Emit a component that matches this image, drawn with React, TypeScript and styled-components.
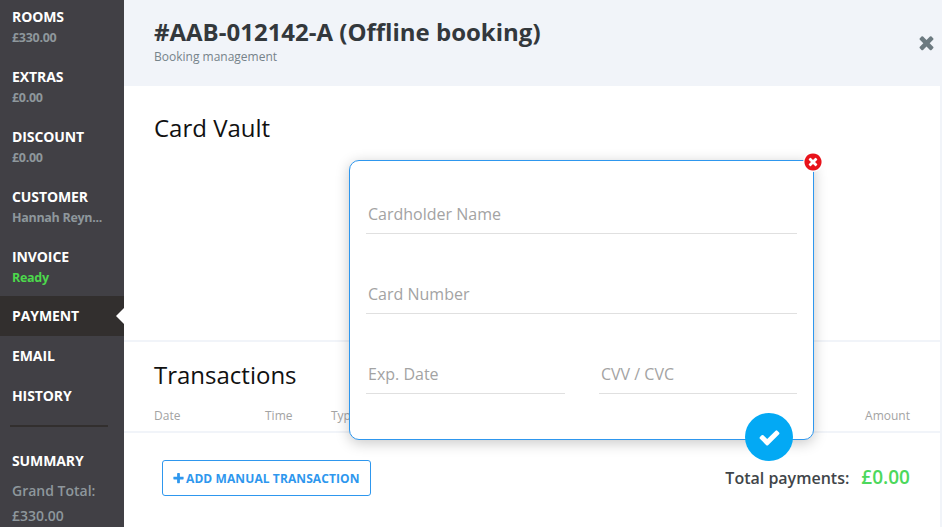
import React from "react";
import styled, { createGlobalStyle } from "styled-components";

const Global = createGlobalStyle`
  html, body { margin: 0; padding: 0; height: 100%; overflow: hidden; background: #fff; }
  body { font-family: "Open Sans", "Liberation Sans", sans-serif; }
  #root { height: 100%; }
`;

const paths = {
  check:
    "M1671 566q0 40-28 68l-724 724-136 136q-28 28-68 28t-68-28l-136-136-362-362q-28-28-28-68t28-68l136-136q28-28 68-28t68 28l294 295 656-657q28-28 68-28t68 28l136 136q28 28 28 68z",
  times:
    "M1490 1322q0 40-28 68l-136 136q-28 28-68 28t-68-28l-294-294-294 294q-28 28-68 28t-68-28l-136-136q-28-28-28-68t28-68l294-294-294-294q-28-28-28-68t28-68l136-136q28-28 68-28t68 28l294 294 294-294q28-28 68-28t68 28l136 136q28 28 28 68t-28 68l-294 294 294 294q28 28 28 68z",
  plus:
    "M1600 736v192q0 40-28 68t-68 28h-416v416q0 40-28 68t-68 28h-192q-40 0-68-28t-28-68v-416h-416q-40 0-68-28t-28-68v-192q0-40 28-68t68-28h416v-416q0-40 28-68t68-28h192q40 0 68 28t28 68v416h416q40 0 68 28t28 68z",
  timesCircle:
    "M1277 1122q0-26-19-45l-181-181 181-181q19-19 19-45 0-27-19-46l-90-90q-19-19-46-19-26 0-45 19l-181 181-181-181q-19-19-45-19-27 0-46 19l-90 90q-19 19-19 46 0 26 19 45l181 181-181 181q-19 19-19 45 0 27 19 46l90 90q19 19 46 19 26 0 45-19l181-181 181 181q19 19 45 19 27 0 46-19l90-90q19-19 19-46zm387-226q0 209-103 385.5t-279.5 279.5-385.5 103-385.5-103-279.5-279.5-103-385.5 103-385.5 279.5-279.5 385.5-103 385.5 103 279.5 279.5 103 385.5z",
};

const Icon = ({ name, size }: { name: keyof typeof paths; size: number }) => (
  <svg width={size} height={size} viewBox="0 0 1792 1792" fill="currentColor" aria-hidden="true">
    <path d={paths[name]} />
  </svg>
);

const Page = styled.div`
  position: relative;
  display: flex;
  width: 942px;
  height: 527px;
  overflow: hidden;
`;

const Sidebar = styled.nav`
  width: 124px;
  flex: none;
  background: #414045;
  display: flex;
  flex-direction: column;
`;

const NavItem = styled.div<{ $active?: boolean; $height?: number }>`
  position: relative;
  flex: none;
  height: ${(p) => p.$height ?? 40}px;
  padding: ${(p) => (p.$height ? 7 : 10)}px 0 0 12px;
  box-sizing: border-box;
  background: ${(p) => (p.$active ? "#322f2e" : "transparent")};
  ${(p) =>
    p.$active &&
    `&::after {
      content: "";
      position: absolute;
      right: 0;
      top: 12px;
      border-style: solid;
      border-width: 8px 8px 8px 0;
      border-color: transparent #fff transparent transparent;
    }`}
`;

const NavLabel = styled.div`
  font-size: 14px;
  line-height: 20px;
  font-weight: 700;
  letter-spacing: -0.1px;
  color: #fff;
`;

const NavSub = styled.div<{ $ok?: boolean }>`
  font-size: 12.5px;
  line-height: 19px;
  font-weight: 700;
  letter-spacing: -0.3px;
  padding-top: 1px;
  color: ${(p) => (p.$ok ? "#4cd84c" : "#8e979c")};
`;

const Divider = styled.div`
  flex: none;
  height: 2px;
  margin: 9px 16px 0 10px;
  background: #322f2e;
`;

const Summary = styled.div`
  padding: 24px 0 0 12px;
`;

const GrandTotal = styled.div<{ $first?: boolean }>`
  font-size: 14px;
  line-height: 25px;
  font-weight: 600;
  color: #8e979c;
  margin-top: ${(p) => (p.$first ? 7 : 0)}px;
`;

const Main = styled.main`
  flex: 1;
  min-width: 0;
  display: flex;
  flex-direction: column;
  border-right: 2px solid #f1f4f9;
`;

const Header = styled.header`
  position: relative;
  height: 86px;
  flex: none;
  box-sizing: border-box;
  margin-right: -2px;
  padding: 15px 30px 0;
  background: #f1f4f9;
`;

const Title = styled.h1`
  margin: 0;
  font-size: 24px;
  line-height: 33px;
  font-weight: 700;
  color: #33383c;
`;

const Subtitle = styled.div`
  font-size: 12px;
  line-height: 16px;
  margin-top: 1px;
  color: #76838a;
`;

const CloseButton = styled.span`
  position: absolute;
  right: 5px;
  top: 32px;
  display: flex;
  color: #6c7a80;
`;

const VaultSection = styled.section`
  height: 256px;
  flex: none;
  box-sizing: border-box;
  padding: 25px 30px 0;
  border-bottom: 2px solid #f1f4f9;
`;

const SectionTitle = styled.h2`
  margin: 0;
  font-size: 24px;
  line-height: 33px;
  font-weight: 400;
  color: #111;
`;

const TransSection = styled.section`
  height: 91px;
  flex: none;
  box-sizing: border-box;
  padding: 16px 30px 0;
  border-bottom: 2px solid #f1f4f9;
`;

const Columns = styled.div`
  display: grid;
  grid-template-columns: 111px 66px 1fr auto;
  margin-top: 16px;
`;

const Column = styled.span`
  font-size: 12px;
  line-height: 17px;
  color: #a3a3a3;
`;

const Footer = styled.div`
  display: flex;
  align-items: flex-start;
  justify-content: space-between;
  padding: 27px 30px 0 38px;
`;

const AddButton = styled.button`
  display: flex;
  align-items: center;
  gap: 1px;
  width: 209px;
  height: 36px;
  box-sizing: border-box;
  padding: 0 0 0 9px;
  background: #fff;
  border: 1px solid #2e97ee;
  border-radius: 3px;
  font-family: inherit;
  font-size: 12px;
  font-weight: 700;
  letter-spacing: 0.1px;
  color: #2e97ee;
`;

const Total = styled.div`
  display: flex;
  align-items: baseline;
  gap: 12px;
  margin-top: 1px;
  font-size: 16px;
  line-height: 32px;
  font-weight: 600;
  color: #3f4549;
`;

const TotalAmount = styled.span`
  font-size: 19px;
  font-weight: 600;
  color: #4cd85c;
`;

const Modal = styled.div`
  position: absolute;
  left: 349px;
  top: 160px;
  width: 465px;
  height: 280px;
  box-sizing: border-box;
  background: #fff;
  border: 1px solid #2e97ee;
  border-radius: 10px;
  box-shadow: 0 3px 14px rgba(0, 0, 0, 0.22);
  padding: 33px 16px 0;
`;

const Field = styled.div`
  height: 40px;
  box-sizing: border-box;
  padding: 9px 2px 0;
  border-bottom: 1px solid #e0e0e0;
  font-size: 16px;
  line-height: 22px;
  color: #a3a3a3;
  margin-bottom: 40px;
`;

const FieldRow = styled.div`
  display: grid;
  grid-template-columns: 199px 198px;
  justify-content: space-between;
`;

const ModalClose = styled.span`
  position: absolute;
  right: -10px;
  top: -9px;
  display: flex;
  border-radius: 50%;
  background: #fff;
  color: #e8131b;
`;

const Confirm = styled.span`
  position: absolute;
  left: 395px;
  top: 252px;
  width: 48px;
  height: 48px;
  border-radius: 50%;
  background: #03a9f4;
  display: flex;
  align-items: center;
  justify-content: center;
  color: #fff;
`;

const nav = [
  { label: "ROOMS", sub: "£330.00", height: 60 },
  { label: "EXTRAS", sub: "£0.00", height: 60 },
  { label: "DISCOUNT", sub: "£0.00", height: 60 },
  { label: "CUSTOMER", sub: "Hannah Reyn...", height: 60 },
  { label: "INVOICE", sub: "Ready", ok: true, height: 56 },
];

export default function App() {
  return (
    <Page>
      <Global />
      <Sidebar>
        {nav.map((n) => (
          <NavItem key={n.label} $height={n.height}>
            <NavLabel>{n.label}</NavLabel>
            <NavSub $ok={n.ok}>{n.sub}</NavSub>
          </NavItem>
        ))}
        <NavItem $active>
          <NavLabel>PAYMENT</NavLabel>
        </NavItem>
        <NavItem>
          <NavLabel>EMAIL</NavLabel>
        </NavItem>
        <NavItem>
          <NavLabel>HISTORY</NavLabel>
        </NavItem>
        <Divider />
        <Summary>
          <NavLabel>SUMMARY</NavLabel>
          <GrandTotal $first>Grand Total:</GrandTotal>
          <GrandTotal>£330.00</GrandTotal>
        </Summary>
      </Sidebar>
      <Main>
        <Header>
          <Title>#AAB-012142-A (Offline booking)</Title>
          <Subtitle>Booking management</Subtitle>
          <CloseButton>
            <Icon name="times" size={21} />
          </CloseButton>
        </Header>
        <VaultSection>
          <SectionTitle>Card Vault</SectionTitle>
        </VaultSection>
        <TransSection>
          <SectionTitle>Transactions</SectionTitle>
          <Columns>
            <Column>Date</Column>
            <Column>Time</Column>
            <Column>Type</Column>
            <Column>Amount</Column>
          </Columns>
        </TransSection>
        <Footer>
          <AddButton>
            <Icon name="plus" size={13} />
            ADD MANUAL TRANSACTION
          </AddButton>
          <Total>
            Total payments:
            <TotalAmount>£0.00</TotalAmount>
          </Total>
        </Footer>
      </Main>
      <Modal>
        <ModalClose>
          <Icon name="timesCircle" size={20} />
        </ModalClose>
        <Field>Cardholder Name</Field>
        <Field>Card Number</Field>
        <FieldRow>
          <Field>Exp. Date</Field>
          <Field>CVV / CVC</Field>
        </FieldRow>
        <Confirm>
          <Icon name="check" size={23} />
        </Confirm>
      </Modal>
    </Page>
  );
}
